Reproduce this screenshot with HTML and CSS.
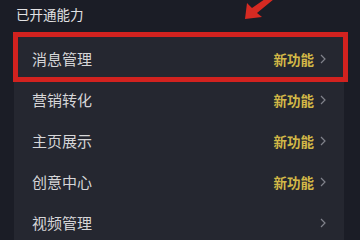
FILE: index.html
```html
<!DOCTYPE html>
<html lang="zh">
<head>
<meta charset="utf-8">
<link rel="stylesheet" href="styles.css">
</head>
<body>
<div class="page">
  <div class="title">已开通能力</div>
  <div class="card">
    <div class="row"><span class="label">消息管理</span><span class="right"><span class="new">新功能</span><svg class="chev" width="6" height="10" viewBox="0 0 6 10"><path d="M1 1 L5 5 L1 9" fill="none" stroke="#80828b" stroke-width="1.2"/></svg></span></div>
    <div class="row"><span class="label">营销转化</span><span class="right"><span class="new">新功能</span><svg class="chev" width="6" height="10" viewBox="0 0 6 10"><path d="M1 1 L5 5 L1 9" fill="none" stroke="#80828b" stroke-width="1.2"/></svg></span></div>
    <div class="row"><span class="label">主页展示</span><span class="right"><span class="new">新功能</span><svg class="chev" width="6" height="10" viewBox="0 0 6 10"><path d="M1 1 L5 5 L1 9" fill="none" stroke="#80828b" stroke-width="1.2"/></svg></span></div>
    <div class="row"><span class="label">创意中心</span><span class="right"><span class="new">新功能</span><svg class="chev" width="6" height="10" viewBox="0 0 6 10"><path d="M1 1 L5 5 L1 9" fill="none" stroke="#80828b" stroke-width="1.2"/></svg></span></div>
    <div class="row"><span class="label">视频管理</span><span class="right"><svg class="chev" width="6" height="10" viewBox="0 0 6 10"><path d="M1 1 L5 5 L1 9" fill="none" stroke="#80828b" stroke-width="1.2"/></svg></span></div>
  </div>
  <div class="highlight"></div>
  <svg class="arrow" width="40" height="24" viewBox="0 0 40 24">
    <path d="M7 19 L9 3 L14 8 L27 -1 L36 -1 L19 13 L24 17 Z" fill="#d62a22"/>
  </svg>
</div>
</body>
</html>
```
FILE: styles.css
```css
html, body {
  margin: 0;
  padding: 0;
  background: #1b1d26;
}
.page {
  position: relative;
  width: 360px;
  height: 240px;
  overflow: hidden;
  font-family: "Noto Sans CJK SC", "Noto Sans", sans-serif;
}
.title {
  padding: 5px 0 0 16px;
  height: 28px;
  font-size: 13.5px;
  line-height: 18px;
  color: #e2e2e4;
}
.card {
  margin-left: 14px;
  width: 330px;
  background: #252730;
  padding-top: 5px;
}
.row {
  height: 41px;
  display: flex;
  align-items: center;
  justify-content: space-between;
  padding: 0 18px 0 18px;
}
.label {
  font-size: 15px;
  color: #d6d6d8;
}
.right {
  display: flex;
  align-items: center;
  gap: 6px;
}
.new {
  font-size: 13.5px;
  font-weight: 600;
  color: #d2b847;
}
.chev {
  display: block;
}
.highlight {
  position: absolute;
  left: 13px;
  top: 32px;
  width: 325px;
  height: 40px;
  border: 5px solid #d2221f;
}
.arrow {
  position: absolute;
  left: 238px;
  top: 0;
}
```
